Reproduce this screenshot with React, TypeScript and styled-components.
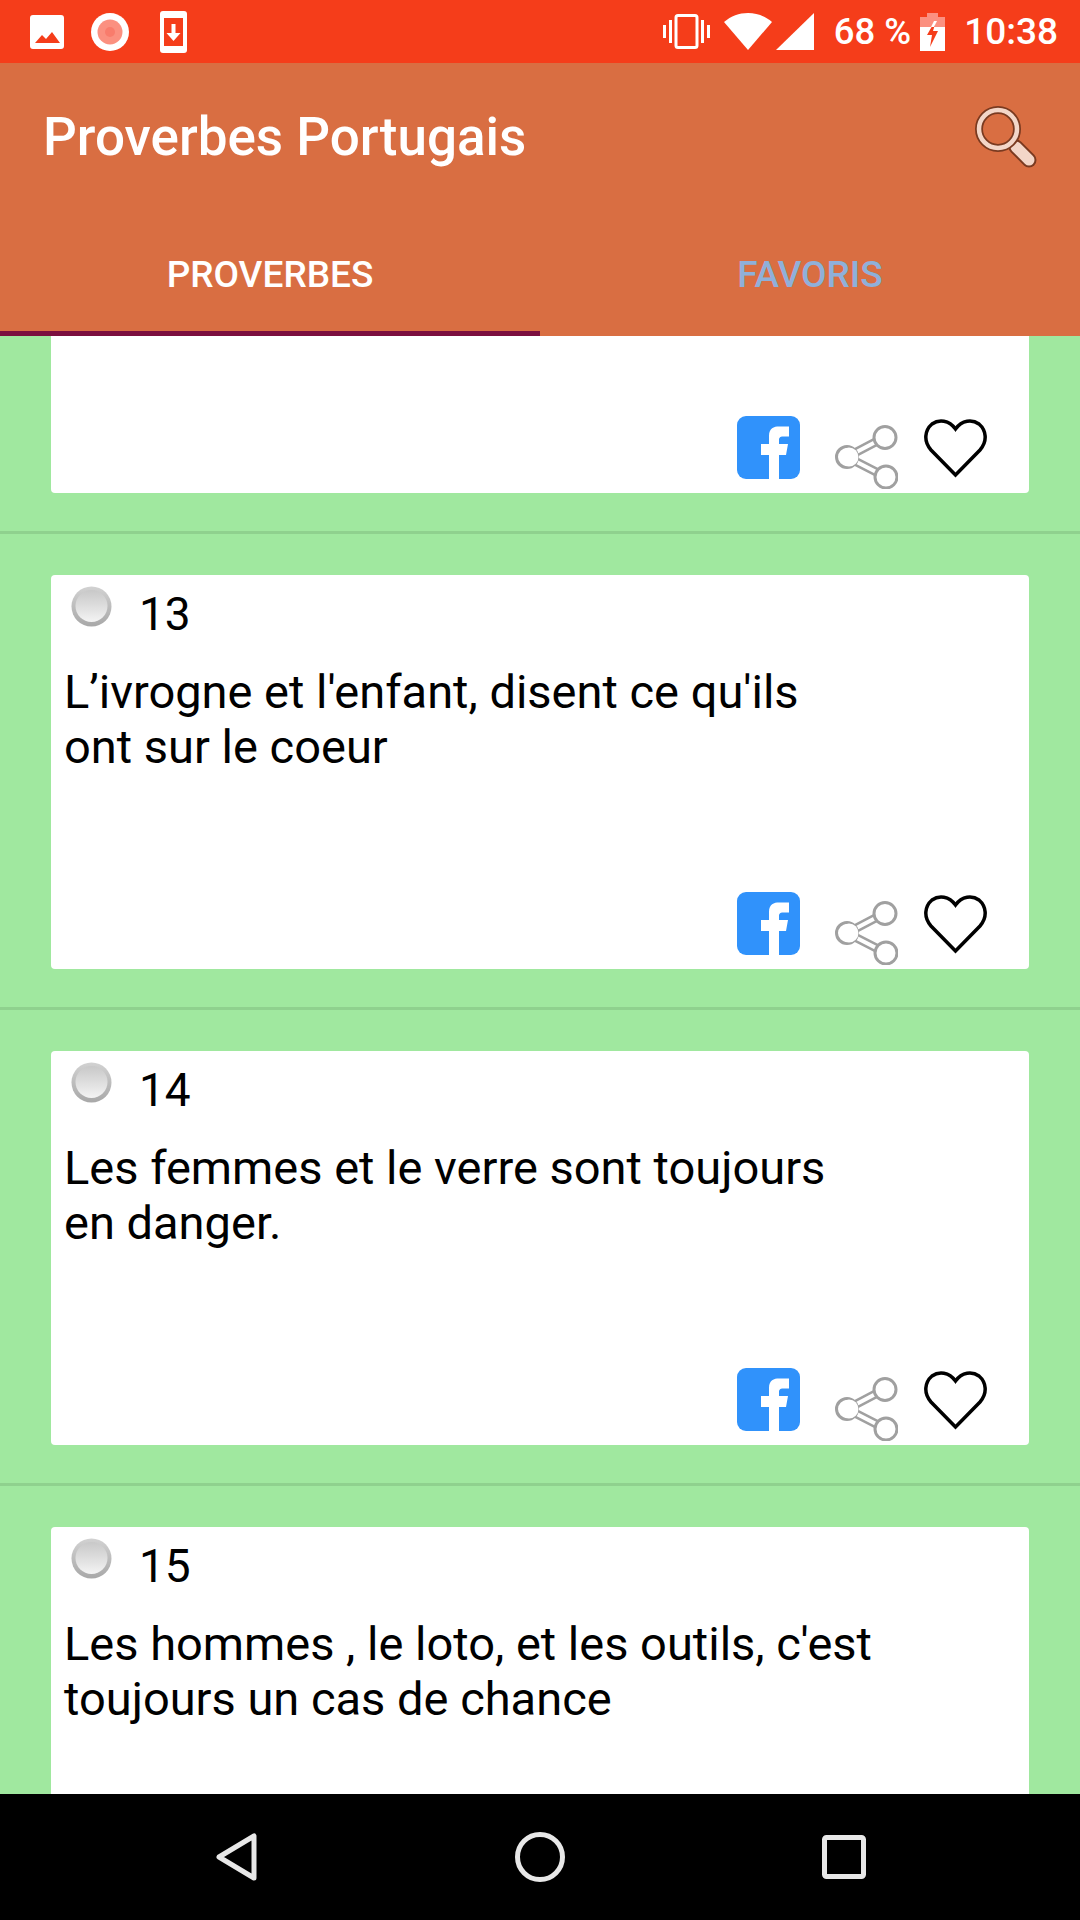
import React from 'react'
import styled, { createGlobalStyle } from 'styled-components'

const GlobalStyle = createGlobalStyle`
  html, body {
    margin: 0;
    padding: 0;
    background: #000;
  }
  * {
    box-sizing: border-box;
  }
`

const proverbs = [
  { id: 12, lines: ['', ''] },
  { id: 13, lines: ["L’ivrogne et l'enfant, disent ce qu'ils", 'ont sur le coeur'] },
  { id: 14, lines: ['Les femmes et le verre sont toujours', 'en danger.'] },
  { id: 15, lines: ["Les hommes , le loto, et les outils, c'est", 'toujours un cas de chance'] },
]

export default function App() {
  return (
    <Screen>
      <GlobalStyle />
      <StatusBar>
        <StatusGroup>
          <ImageIcon />
          <RecordIcon />
          <DownloadIcon />
        </StatusGroup>
        <StatusGroup>
          <VibrateIcon />
          <WifiIcon />
          <SignalIcon />
          <BatteryText>68 %</BatteryText>
          <BatteryIcon />
          <Clock>10:38</Clock>
        </StatusGroup>
      </StatusBar>

      <AppBar>
        <TitleRow>
          <Title>Proverbes Portugais</Title>
          <SearchIcon />
        </TitleRow>
        <Tabs>
          <Tab $active>PROVERBES</Tab>
          <Tab>FAVORIS</Tab>
        </Tabs>
      </AppBar>

      <List>
        <ScrollArea>
          {proverbs.map((p) => (
            <Row key={p.id}>
              <Card>
                <CardHead>
                  <Radio />
                  <Number>{p.id}</Number>
                </CardHead>
                <Proverb>
                  {p.lines[0]}
                  <br />
                  {p.lines[1]}
                </Proverb>
                <Actions>
                  <FacebookIcon />
                  <ShareIcon />
                  <HeartIcon />
                </Actions>
              </Card>
            </Row>
          ))}
        </ScrollArea>
      </List>

      <NavBar>
        <BackIcon />
        <HomeIcon />
        <RecentIcon />
      </NavBar>
    </Screen>
  )
}

function ImageIcon() {
  return (
    <svg width='34' height='34' viewBox='0 0 34 34' style={{ marginLeft: 30 }}>
      <path
        fill='#fff'
        fillRule='evenodd'
        d='M3 0h28a3 3 0 0 1 3 3v28a3 3 0 0 1-3 3H3a3 3 0 0 1-3-3V3a3 3 0 0 1 3-3zM5 28h25l-8-11-6 7-4-4z'
      />
    </svg>
  )
}

function RecordIcon() {
  return (
    <svg width='38' height='38' viewBox='0 0 38 38' style={{ marginLeft: 27 }}>
      <circle cx='19' cy='19' r='19' fill='#fff' />
      <circle cx='19' cy='19' r='12.5' fill='#fb9080' />
      <circle cx='19' cy='19' r='5' fill='#f97c6c' />
    </svg>
  )
}

function DownloadIcon() {
  return (
    <svg width='27' height='42' viewBox='0 0 27 42' style={{ marginLeft: 31 }}>
      <rect width='27' height='42' rx='3' fill='#fff' />
      <rect x='4' y='7' width='19' height='28' fill='#f53d1a' />
      <path fill='#fff' d='M11.5 13h4v9h5L13.500 30 6.500 22h5z' />
    </svg>
  )
}

function VibrateIcon() {
  return (
    <svg width='47' height='35' viewBox='0 0 47 35'>
      <rect x='13' y='1.500' width='21' height='32' rx='2' fill='none' stroke='#fff' strokeWidth='3' />
      <rect x='6' y='6' width='3' height='23' fill='#fff' />
      <rect x='38' y='6' width='3' height='23' fill='#fff' />
      <rect x='0' y='11' width='3' height='13' fill='#fff' />
      <rect x='44' y='11' width='3' height='13' fill='#fff' />
    </svg>
  )
}

function WifiIcon() {
  return (
    <svg width='48' height='37' viewBox='0 0 48 37' style={{ marginLeft: 14 }}>
      <path fill='#fff' d='M0 9C7 3 15 0 24 0s17 3 24 9L24 37z' />
    </svg>
  )
}

function SignalIcon() {
  return (
    <svg width='38' height='37' viewBox='0 0 38 37' style={{ marginLeft: 4 }}>
      <path fill='#fff' d='M38 0v37H0z' />
    </svg>
  )
}

function BatteryIcon() {
  return (
    <svg width='25' height='38' viewBox='0 0 25 38' style={{ marginLeft: 9 }}>
      <path fill='#fb9080' d='M7 0h11v4h7v10H0V4h7z' />
      <path fill='#fff' d='M0 14h25v24H0z' />
      <path fill='#f53d1a' d='M15 8 7 22h5l-2 12 8-16h-5l3-10z' />
      <path fill='#fff' d='M14 8h3l-3 6h-3z' />
    </svg>
  )
}

function SearchIcon() {
  return (
    <svg width='64' height='64' viewBox='0 0 64 64' style={{ marginBottom: 8 }}>
      <line x1='43' y1='43' x2='56' y2='56' stroke='#7a3a20' strokeWidth='15' strokeLinecap='round' />
      <line x1='43' y1='43' x2='56' y2='56' stroke='#f3d6c8' strokeWidth='11' strokeLinecap='round' />
      <circle cx='25' cy='25' r='19' fill='none' stroke='#7a3a20' strokeWidth='8' />
      <circle cx='25' cy='25' r='19' fill='none' stroke='#f3d6c8' strokeWidth='4.500' />
    </svg>
  )
}

function Radio() {
  return (
    <svg width='41' height='41' viewBox='0 0 41 41'>
      <circle cx='20.500' cy='20.500' r='20' fill='url(#radio-ring)' />
      <circle cx='20.500' cy='20' r='16' fill='url(#radio-fill)' />
      <defs>
        <linearGradient id='radio-ring' x1='0' y1='0' x2='0' y2='1'>
          <stop offset='0' stopColor='#d2d2d2' />
          <stop offset='1' stopColor='#a8a8a8' />
        </linearGradient>
        <linearGradient id='radio-fill' x1='0' y1='0' x2='0' y2='1'>
          <stop offset='0' stopColor='#c8c8c8' />
          <stop offset='0.6' stopColor='#e2e2e2' />
          <stop offset='1' stopColor='#f4f4f4' />
        </linearGradient>
      </defs>
    </svg>
  )
}

function FacebookIcon() {
  return (
    <svg width='63' height='63' viewBox='0 0 63 63'>
      <rect width='63' height='63' rx='9' fill='#3092fb' />
      <path
        fill='#fff'
        d='M32 63V39H24V28h8v-8c0-8 5-9.500 10-9.500h10v10h-6c-3 0-4 1-4 4V28h9l-2 11h-7v24z'
      />
    </svg>
  )
}

function ShareIcon() {
  return (
    <svg width='63' height='64' viewBox='0 0 63 64'>
      <path
        fill='none'
        stroke='#a0a0a0'
        strokeWidth='9'
        d='M12 32 50 12M12 32l39 20'
      />
      <path
        fill='none'
        stroke='#fff'
        strokeWidth='4'
        d='M12 32 50 12M12 32l39 20'
      />
      <g fill='#fff' stroke='#a0a0a0' strokeWidth='3'>
        <circle cx='12' cy='32' r='10.500' />
        <circle cx='50' cy='12.500' r='11' />
        <circle cx='51' cy='52' r='11' />
      </g>
      <circle cx='14' cy='32' r='9.500' fill='#fff' />
    </svg>
  )
}

function HeartIcon() {
  return (
    <svg width='63' height='60' viewBox='0 0 63 60'>
      <path
        fill='none'
        stroke='#000'
        strokeWidth='3.500'
        strokeLinejoin='miter'
        d='M31.500 57 7 32C-1 23 1 12 8 6c7-5 17-4 23.500 5C38 2 48 1 55 6c7 6 9 17 1 26z'
      />
    </svg>
  )
}

function BackIcon() {
  return (
    <svg width='41' height='48' viewBox='0 0 41 48'>
      <path fill='none' stroke='#e8e8e8' strokeWidth='5' strokeLinejoin='round' d='M38 3v42L3 24z' />
    </svg>
  )
}

function HomeIcon() {
  return (
    <svg width='50' height='50' viewBox='0 0 50 50'>
      <circle cx='25' cy='25' r='22.500' fill='none' stroke='#e8e8e8' strokeWidth='5' />
    </svg>
  )
}

function RecentIcon() {
  return (
    <svg width='44' height='44' viewBox='0 0 44 44'>
      <rect x='2.500' y='2.500' width='39' height='39' rx='2' fill='none' stroke='#e8e8e8' strokeWidth='5' />
    </svg>
  )
}

const Screen = styled.div`
  display: flex;
  flex-direction: column;
  width: 1080px;
  height: 1920px;
  overflow: hidden;
  font-family: Roboto, 'Liberation Sans', sans-serif;
`

const StatusBar = styled.div`
  display: flex;
  flex: none;
  align-items: center;
  justify-content: space-between;
  height: 63px;
  padding-right: 22px;
  background: #f53d1a;
  color: #fff;
`

const StatusGroup = styled.div`
  display: flex;
  align-items: center;
`

const BatteryText = styled.span`
  margin-left: 20px;
  font-size: 36.500px;
  font-weight: 500;
`

const Clock = styled.span`
  margin-left: 19px;
  font-size: 37px;
  font-weight: 500;
`

const AppBar = styled.div`
  flex: none;
  height: 273px;
  background: #d96e42;
`

const TitleRow = styled.div`
  display: flex;
  align-items: center;
  justify-content: space-between;
  height: 153px;
  padding: 0 43px 0 43px;
`

const Title = styled.h1`
  margin: 0 0 5px;
  color: #fff;
  font-size: 53px;
  font-weight: 500;
`

const Tabs = styled.div`
  display: flex;
  height: 120px;
`

const Tab = styled.div<{ $active?: boolean }>`
  display: flex;
  flex: 1;
  align-items: center;
  justify-content: center;
  padding-top: 1px;
  border-bottom: 5px solid ${(p) => (p.$active ? '#7b0f3f' : 'transparent')};
  color: ${(p) => (p.$active ? '#fff' : '#8fb0d9')};
  font-size: 37px;
  font-weight: 500;
`

const List = styled.div`
  flex: 1;
  min-height: 0;
  overflow: hidden;
  background: #a0e89f;
`

const ScrollArea = styled.div`
  margin-top: -237px;
`

const Row = styled.div`
  padding: 0 51px 38px;
  margin-bottom: 41px;
  border-bottom: 3px solid #8fd18e;
`

const Card = styled.div`
  display: flex;
  flex-direction: column;
  height: 394px;
  padding: 11px 0 0 13px;
  border-radius: 4px;
  background: #fff;
`

const CardHead = styled.div`
  display: flex;
  align-items: flex-start;
  height: 56px;
  padding-left: 7px;
`

const Number = styled.span`
  margin: 2px 0 0 27px;
  color: #000;
  font-size: 46px;
  line-height: 52px;
`

const Proverb = styled.p`
  flex: 1;
  margin: 22px 0 0;
  color: #000;
  font-size: 47px;
  line-height: 55px;
`

const Actions = styled.div`
  display: flex;
  align-items: flex-start;
  justify-content: flex-end;
  gap: 26px;
  height: 77px;
  padding-right: 42px;
  & > svg:nth-child(2) {
    margin: 9px 0 0 9px;
  }
  & > svg:nth-child(3) {
    margin-top: 2px;
  }
`

const NavBar = styled.div`
  display: flex;
  flex: none;
  align-items: center;
  justify-content: space-between;
  height: 126px;
  padding: 0 214px 1px 216px;
  background: #000;
`
